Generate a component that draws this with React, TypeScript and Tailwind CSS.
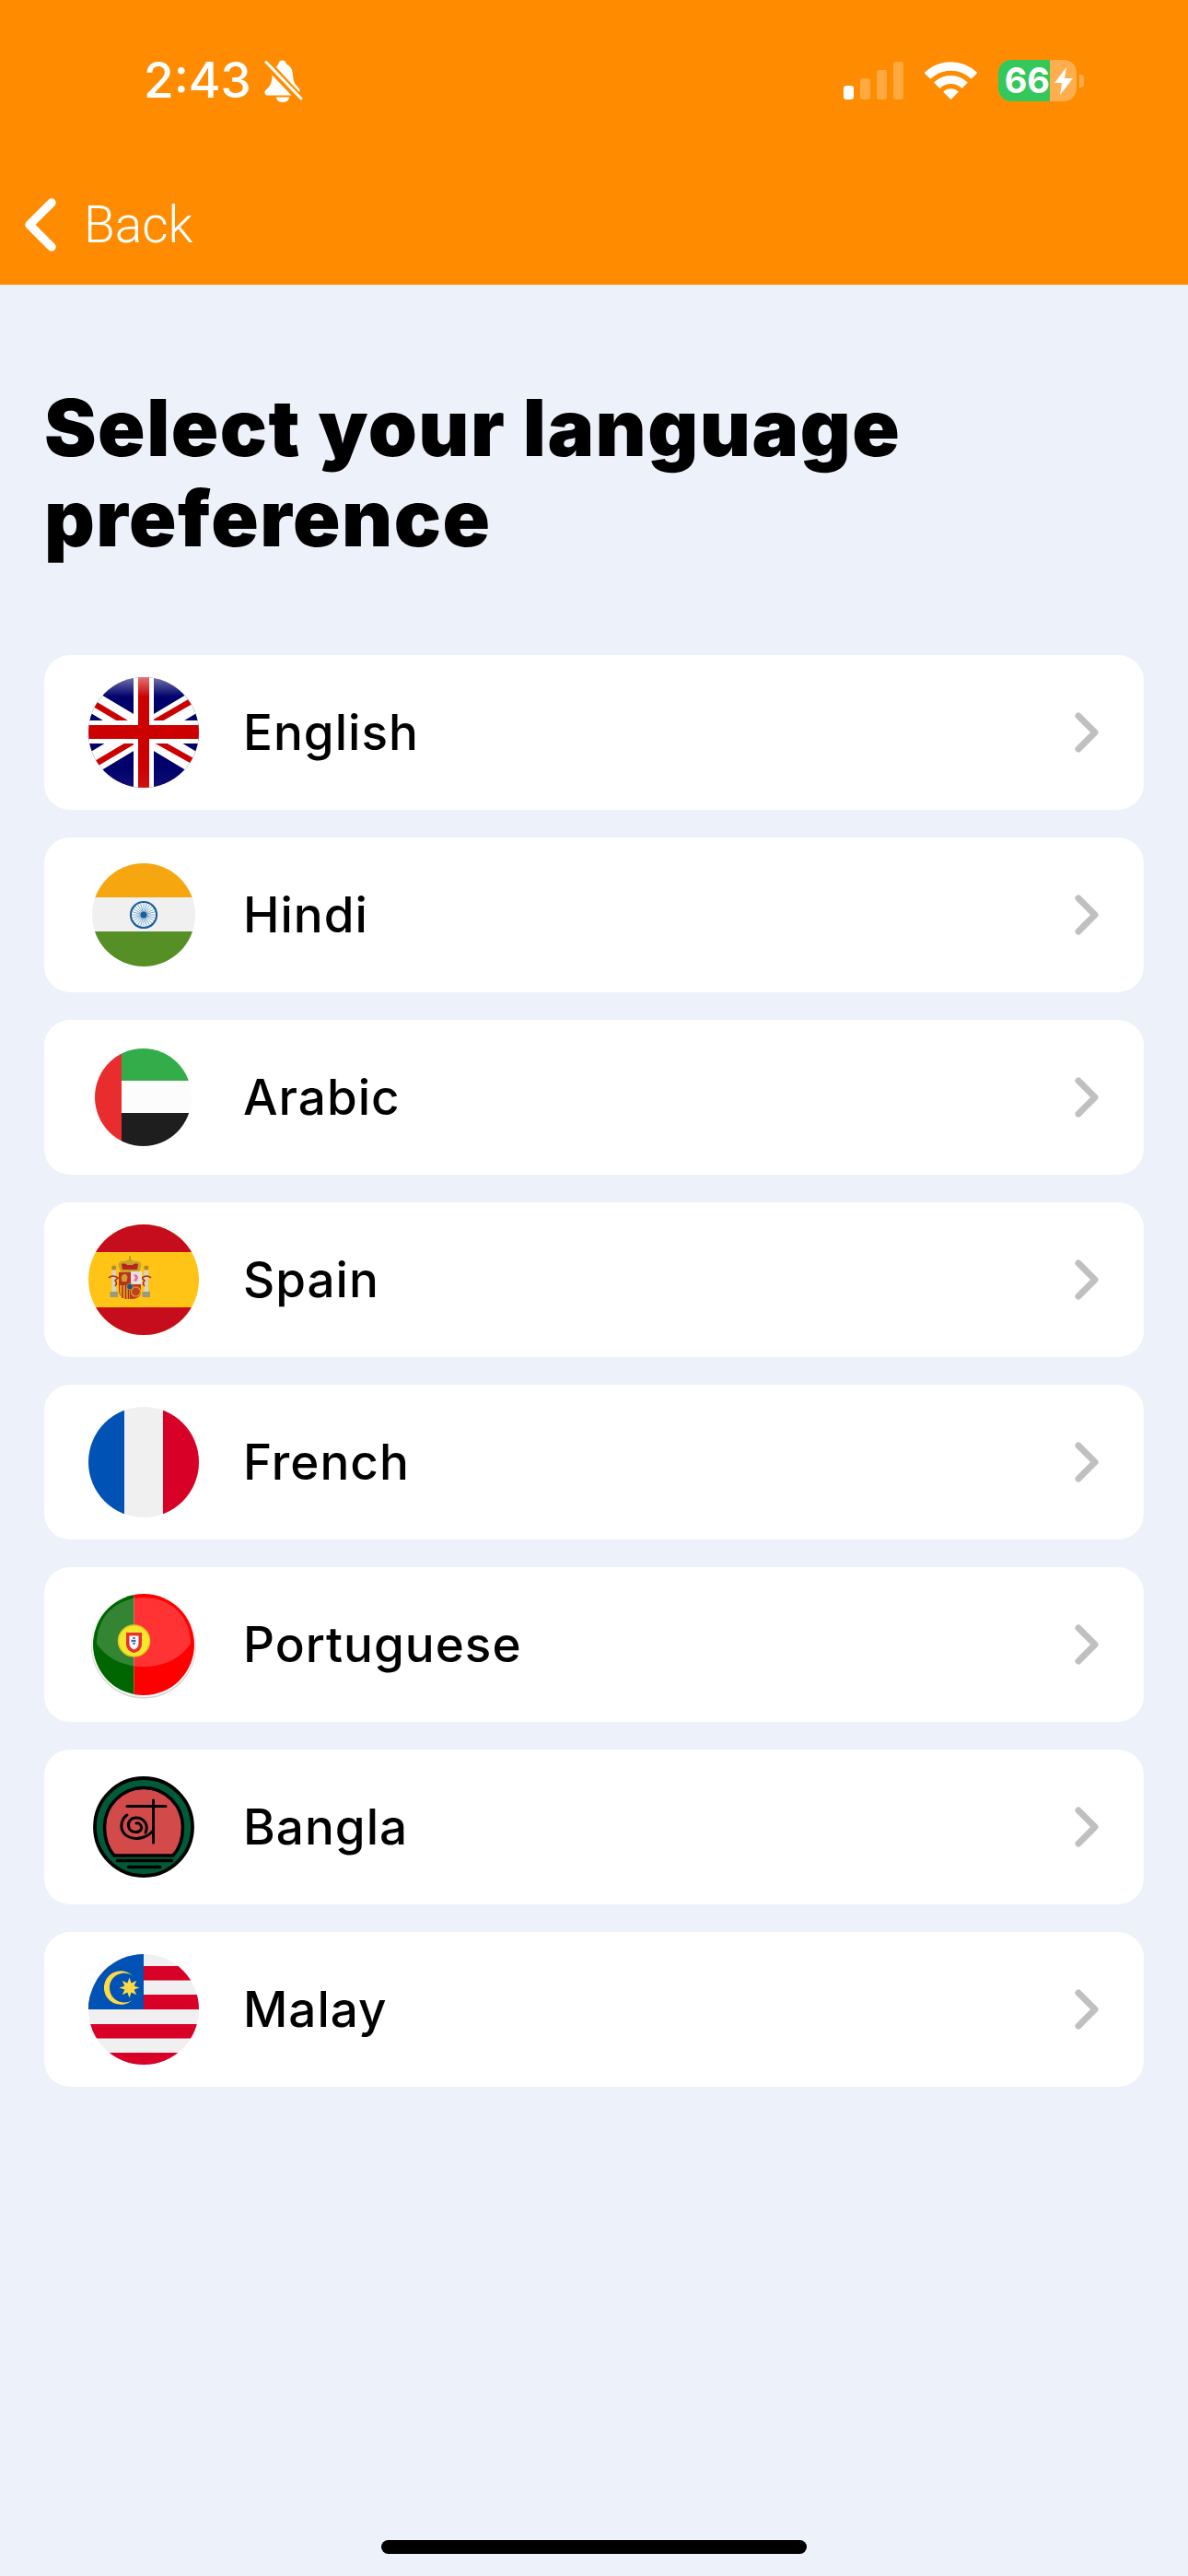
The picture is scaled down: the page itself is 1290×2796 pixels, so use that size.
import React from "react";

const FONT_UI = "font-['Inter','Liberation_Sans',sans-serif]";

function BellOff() {
  return (
    <svg width="42" height="46" viewBox="0 0 42 46" fill="none">
      <path d="M2 2.5 40 42" stroke="#fff" strokeWidth="3" strokeLinecap="round" />
      <path d="M12.5 7.5c1-.6 1.8-1.2 2.4-2.6C15.900 2 17 .5 19.500.5s3.700 1.500 4.500 4c3.500 1.500 6 5 6.700 9 .6 4 .3 9 3 13l4 4.500c1 1.300 1 2.700.3 4z" fill="#fff" />
      <path d="M8.500 16.500 29.500 38.500H3.500C.5 38.500-.5 35.500 1 33.500c3.500-3.500 6.300-6.500 7-11z" fill="#fff" />
      <path d="M13 40.500h14c0 3-3 5.500-7 5.500s-7-2.500-7-5.500z" fill="#fff" />
    </svg>
  );
}

function SignalBars() {
  const bars = ["h-[15px] bg-white", "h-[23px] bg-white/25", "h-[32px] bg-white/25", "h-[41px] bg-white/25"];
  return (
    <div className="flex items-end gap-[7px] h-[41px]">
      {bars.map((b, i) => (
        <div key={i} className={`w-[11px] rounded-[3px] ${b}`} />
      ))}
    </div>
  );
}

function Wifi() {
  return (
    <svg width="57" height="41" viewBox="0 0 57 41" fill="none">
      <path d="M3 15.500a36 36 0 0 1 51 0" stroke="#fff" strokeWidth="9.500" />
      <path d="M13.300 25.800a21.500 21.500 0 0 1 30.400 0" stroke="#fff" strokeWidth="9" />
      <path d="M28.500 41 20.200 32.700a11.700 11.700 0 0 1 16.600 0z" fill="#fff" />
    </svg>
  );
}

function Battery() {
  return (
    <div className="flex items-center gap-[3px]">
      <div className="flex w-[85px] h-[45px] rounded-[14px] overflow-hidden bg-white/30">
        <div className={`w-[56px] bg-[#34c759] text-white text-[38px] leading-[45px] font-bold text-right ${FONT_UI}`}>
          66
        </div>
        <div className="flex-1 flex items-center justify-center">
          <svg width="20" height="30" viewBox="0 0 20 30">
            <path d="M13 0 0 17h8L6 30l14-18h-9z" fill="#fff" />
          </svg>
        </div>
      </div>
      <div className="w-[5px] h-[14px] rounded-r-[4px] bg-white/30" />
    </div>
  );
}

function FlagUK() {
  return (
    <svg width="120" height="120" viewBox="0 0 120 120">
      <defs>
        <clipPath id="uk-clip"><circle cx="60" cy="60" r="60" /></clipPath>
        <linearGradient id="uk-gloss" x1="0" y1="0" x2="0" y2="1">
          <stop offset="0" stopColor="#fff" stopOpacity="0.45" />
          <stop offset="0.18" stopColor="#fff" stopOpacity="0" />
          <stop offset="0.8" stopColor="#fff" stopOpacity="0" />
          <stop offset="1" stopColor="#fff" stopOpacity="0.06" />
        </linearGradient>
      </defs>
      <g clipPath="url(#uk-clip)">
        <rect width="120" height="120" fill="#00006b" />
        <path d="M-10 18 130 102M130 18-10 102" stroke="#fff" strokeWidth="23" />
        <path d="M-2 24 50 55M122 20 70 50M-2 100 50 69M122 96 72 68" stroke="#cc0000" strokeWidth="6.500" />
        <rect x="49" width="22" height="120" fill="#fff" />
        <rect y="47" width="120" height="25" fill="#fff" />
        <rect x="54" width="12" height="120" fill="#cc0000" />
        <rect y="52" width="120" height="15" fill="#cc0000" />
        <rect width="120" height="120" fill="url(#uk-gloss)" />
      </g>
    </svg>
  );
}

function FlagIndia() {
  const spokes = Array.from({ length: 24 }, (_, i) => (i * 360) / 24);
  return (
    <svg width="120" height="120" viewBox="0 0 120 120">
      <defs>
        <clipPath id="in-clip"><circle cx="60" cy="60" r="56" /></clipPath>
      </defs>
      <g clipPath="url(#in-clip)">
        <rect width="120" height="42" fill="#f6a60f" />
        <rect y="41" width="120" height="38" fill="#f0f0f0" />
        <rect y="78" width="120" height="42" fill="#568f25" />
      </g>
      <circle cx="60" cy="60" r="14" fill="#fff" stroke="#1a5f9a" strokeWidth="2.200" />
      {spokes.map((a) => (
        <path key={a} d="M60 60V47.500" stroke="#4f8dbd" strokeWidth="0.7" transform={`rotate(${a} 60 60)`} />
      ))}
      <circle cx="60" cy="60" r="3.500" fill="#1a5f9a" />
    </svg>
  );
}

function FlagUAE() {
  return (
    <svg width="120" height="120" viewBox="0 0 120 120">
      <defs>
        <clipPath id="ae-clip"><ellipse cx="59.500" cy="60" rx="52.500" ry="53" /></clipPath>
      </defs>
      <g clipPath="url(#ae-clip)">
        <rect x="36" width="84" height="43" fill="#33ad4a" />
        <rect x="36" y="42" width="84" height="36" fill="#fcfcfc" />
        <rect x="36" y="77" width="84" height="43" fill="#1e1e1e" />
        <rect width="36" height="120" fill="#e92c2e" />
      </g>
    </svg>
  );
}

function FlagSpain() {
  return (
    <svg width="120" height="120" viewBox="0 0 120 120">
      <defs>
        <clipPath id="es-clip"><circle cx="60" cy="60" r="60" /></clipPath>
      </defs>
      <g clipPath="url(#es-clip)">
        <rect width="120" height="120" fill="#ffc415" />
        <rect width="120" height="30" fill="#c60d1e" />
        <rect y="90" width="120" height="30" fill="#c60d1e" />
      </g>
      {/* pillars */}
      <rect x="25.500" y="49" width="4.500" height="24" fill="#d8d4c4" />
      <rect x="23.500" y="73" width="8.500" height="6" fill="#9a9a80" />
      <circle cx="27.800" cy="47" r="2.600" fill="#b88a20" />
      <rect x="60.500" y="49" width="4.500" height="24" fill="#d8d4c4" />
      <rect x="58.500" y="73" width="8.500" height="6" fill="#9a9a80" />
      <circle cx="62.800" cy="47" r="2.600" fill="#b88a20" />
      <path d="M22 58c3-3 7-2 10 0l-3 3c2 2 2 4 0 6" stroke="#a8321e" strokeWidth="1.600" fill="none" />
      <path d="M68 58c-3-3-7-2-10 0l3 3c-2 2-2 4 0 6" stroke="#a8321e" strokeWidth="1.600" fill="none" />
      {/* crown */}
      <path d="M33 46c-2-5 3-7 7-6 2-1 3-2 5-2s3 1 5 2c4-1 9 1 7 6l-2 6H35z" fill="#c9a227" />
      <path d="M36 43c3-1 5 0 6 1h6c1-1 3-2 6-1l-1 6H37z" fill="#b5261f" />
      <rect x="44.400" y="34" width="1.200" height="5" fill="#a88a20" />
      {/* shield */}
      <path d="M33 52h24v20c0 6-5 9-12 9s-12-3-12-9z" fill="#b8321f" />
      <rect x="46" y="51" width="12" height="14" fill="#eadfe0" />
      <path d="M49 54l4 1 1 3-2 4-3-1 2-3z" fill="#d8729a" />
      <path d="M34 66h11v15c-6 0-11-2-11-8z" fill="#dca52a" />
      <path d="M37 66v14M40.500 66v15M43.500 66v15" stroke="#b5261f" strokeWidth="1.400" />
      <path d="M46 66h11v7c0 5-4 8-11 8z" fill="#c2401f" />
      <circle cx="51.500" cy="73" r="5" fill="none" stroke="#dca52a" strokeWidth="1.200" />
      <path d="M38 54l3 0 1.500 3-1 5h-5l-1-5z" fill="#cfa030" />
      <circle cx="45" cy="67.500" r="3.300" fill="#1d4f8c" stroke="#b89a27" strokeWidth="0.8" />
    </svg>
  );
}

function FlagFrance() {
  return (
    <svg width="120" height="120" viewBox="0 0 120 120">
      <defs>
        <clipPath id="fr-clip"><circle cx="60" cy="60" r="60" /></clipPath>
      </defs>
      <g clipPath="url(#fr-clip)">
        <rect width="39" height="120" fill="#0052b4" />
        <rect x="39" width="42" height="120" fill="#f0f0f0" />
        <rect x="81" width="39" height="120" fill="#d80027" />
      </g>
    </svg>
  );
}

function FlagPortugal() {
  return (
    <svg width="120" height="120" viewBox="0 0 120 120">
      <defs>
        <clipPath id="pt-clip"><circle cx="60" cy="60" r="55" /></clipPath>
      </defs>
      <circle cx="60" cy="61.500" r="57" fill="#d2d2d2" />
      <circle cx="60" cy="60.500" r="56.500" fill="#fafafa" />
      <g clipPath="url(#pt-clip)">
        <rect width="49.500" height="120" fill="#006600" />
        <rect x="49.500" width="71" height="120" fill="#ff0000" />
        <path d="M9 59C9 30 30 9 60 9s51 21 51 50c-12 18-32 25-51 25S21 77 9 59z" fill="#fff" fillOpacity="0.2" />
      </g>
      <circle cx="49.500" cy="56" r="17" fill="#f6e72e" stroke="#dcc81e" strokeWidth="1.500" />
      <path d="M41 47h17v12c0 6-4 9-8.500 10-4.500-1-8.500-4-8.500-10z" fill="#e8322e" />
      <path d="M44.500 50.500h10v8.500c0 3.500-2.500 5.500-5 6.500-2.500-1-5-3-5-6.500z" fill="#fff" />
      <path d="M49.500 52v9M46.500 56h6" stroke="#3f68b0" strokeWidth="2.400" strokeDasharray="2 1" />
    </svg>
  );
}

function FlagBangla() {
  return (
    <svg width="120" height="120" viewBox="0 0 120 120">
      <circle cx="60" cy="60" r="53" fill="#005c38" stroke="#000" strokeWidth="3.800" />
      <path d="M28 91C19 81 17.500 70 17.500 60a42.500 42.500 0 0 1 85 0c0 10-1.500 21-10.500 31z" fill="#d34a4a" stroke="#000" strokeWidth="3.500" strokeLinejoin="round" />
      <path d="M31.500 96.500H90.500M43.500 103.500H78" stroke="#000" strokeWidth="3.500" strokeLinecap="round" />
      <path d="M42 37.500H84M70.500 31V77" stroke="#000" strokeWidth="3" strokeLinecap="round" />
      <path d="M42 47C36 51 34 60 38 66C42 72 52 74 60 71C65 69 68 67 70 64" stroke="#000" strokeWidth="3" strokeLinecap="round" fill="none" />
      <path d="M62 66C66 58 60 50 52 50C45 50 42 56 44 61C46 66 54 67 57 63C59 60 56 55 52 56" stroke="#000" strokeWidth="3" strokeLinecap="round" fill="none" />
    </svg>
  );
}

function FlagMalay() {
  const star = Array.from({ length: 16 }, (_, i) => {
    const r = i % 2 === 0 ? 11 : 5.5;
    const a = (i * Math.PI) / 8 - Math.PI / 2;
    return `${(44.5 + r * Math.cos(a)).toFixed(2)},${(36.5 + r * Math.sin(a)).toFixed(2)}`;
  }).join(" ");
  return (
    <svg width="120" height="120" viewBox="0 0 120 120">
      <defs>
        <clipPath id="my-clip"><circle cx="60" cy="60" r="60" /></clipPath>
      </defs>
      <g clipPath="url(#my-clip)">
        <rect width="120" height="120" fill="#f0f0f0" />
        <rect y="13" width="120" height="15.500" fill="#d80027" />
        <rect y="44" width="120" height="16" fill="#d80027" />
        <rect y="76" width="120" height="15.500" fill="#d80027" />
        <rect y="107" width="120" height="13" fill="#d80027" />
        <rect width="60" height="60" fill="#0052b4" />
      </g>
      <path d="M34.500 18.200A18.300 18.300 0 1 0 47.500 50 16 16 0 1 1 47.500 23 18.300 18.300 0 0 0 34.500 18.200z" fill="#ffda44" />
      <polygon points={star} fill="#ffda44" />
    </svg>
  );
}

const languages = [
  { name: "English", flag: <FlagUK /> },
  { name: "Hindi", flag: <FlagIndia /> },
  { name: "Arabic", flag: <FlagUAE /> },
  { name: "Spain", flag: <FlagSpain /> },
  { name: "French", flag: <FlagFrance /> },
  { name: "Portuguese", flag: <FlagPortugal /> },
  { name: "Bangla", flag: <FlagBangla /> },
  { name: "Malay", flag: <FlagMalay /> },
];

function LanguageRow({ name, flag }: { name: string; flag: React.ReactNode }) {
  return (
    <div className="h-[168px] bg-white rounded-[28px] flex items-center pl-[48px] pr-[49px]">
      <div className="w-[120px] h-[120px] shrink-0">{flag}</div>
      <span className={`ml-[48px] flex-1 text-[53px] leading-none font-medium tracking-[1px] text-black ${FONT_UI}`}>
        {name}
      </span>
      <svg width="26" height="44" viewBox="0 0 26 44" fill="none">
        <path d="M4 4 22 22 4 40" stroke="#c0c0c0" strokeWidth="7" strokeLinecap="round" strokeLinejoin="round" />
      </svg>
    </div>
  );
}

export default function App() {
  return (
    <div className="min-h-[2796px] flex flex-col bg-[#edf1fa]">
      <header className="h-[309px] bg-[#ff8c00] text-white flex flex-col">
        <div className="mt-[64px] h-[47px] flex items-center pl-[156px] pr-[113px]">
          <span className={`text-[53px] leading-none font-medium ${FONT_UI}`}>2:43</span>
          <div className="ml-[14px]">
            <BellOff />
          </div>
          <div className="ml-auto flex items-center gap-[23px]">
            <SignalBars />
            <Wifi />
            <Battery />
          </div>
        </div>
        <div className="mt-[104px] flex items-center pl-[27px]">
          <svg width="34" height="58" viewBox="0 0 34 58" fill="none">
            <path d="M29 5 5 29l24 24" stroke="#fff" strokeWidth="9.500" strokeLinecap="round" strokeLinejoin="round" />
          </svg>
          <span className="ml-[30px] text-[55px] leading-none font-light font-['Roboto',sans-serif]">Back</span>
        </div>
      </header>

      <main className="flex-1 px-[48px] pt-[107px]">
        <h1 className={`text-[85px] leading-[98px] font-black tracking-[1.5px] text-black mb-[99px] ${FONT_UI}`}>
          Select your language
          <br />
          preference
        </h1>
        <div className="flex flex-col gap-[30px]">
          {languages.map((l) => (
            <LanguageRow key={l.name} name={l.name} flag={l.flag} />
          ))}
        </div>
      </main>

      <div className="pb-[24px] flex justify-center">
        <div className="w-[462px] h-[15px] rounded-full bg-black" />
      </div>
    </div>
  );
}
